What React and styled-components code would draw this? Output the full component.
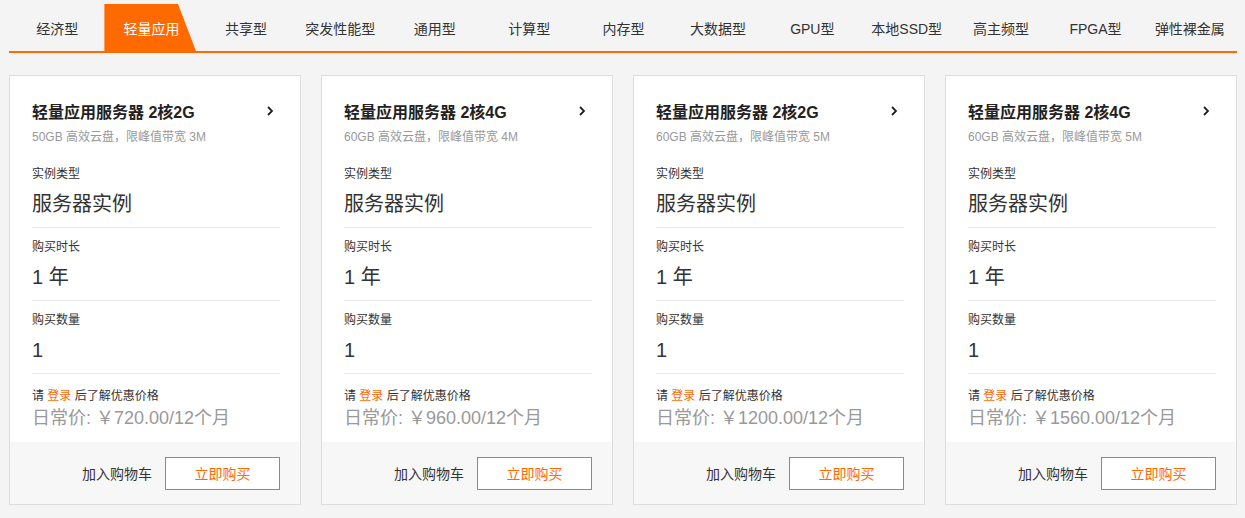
import React from 'react';
import styled, { createGlobalStyle } from 'styled-components';

const GlobalStyle = createGlobalStyle`
    body {
        margin: 0;
        background: #f4f4f4;
        font-family: "Liberation Sans", "Noto Sans CJK SC", sans-serif;
        color: #333;
    }
`;

const Page = styled.div`
    padding: 4px 8px 0 9px;
`;

const TabBar = styled.ul`
    display: flex;
    margin: 0;
    padding: 0 0 0 1px;
    width: 1227px;
    border-bottom: 2px solid #ff6a00;
`;

const Tab = styled.li`
    flex: 1 1 0;
    min-width: 0;
    list-style-type: none;
    height: 47px;
    display: flex;
    align-items: center;
    justify-content: center;
    white-space: nowrap;
    font-size: 14px;
    color: ${props => props.active ? '#fff' : '#333'};
    background: ${props => props.active ? '#ff6a00' : 'transparent'};
    clip-path: ${props => props.active ? 'polygon(0 0, 78% 0, 97% 100%, 0 100%)' : 'none'};
    cursor: pointer;
`;

const CardGrid = styled.div`
    display: grid;
    grid-template-columns: repeat(4, 292px);
    gap: 20px;
    margin-top: 22px;
    width: 1228px;
`;

const Card = styled.div`
    background: #fff;
    border: 1px solid #ddd;
    display: flex;
    flex-direction: column;
`;

const Body = styled.div`
    padding: 24px 20px 12px 22px;
`;

const TitleRow = styled.div`
    display: flex;
    align-items: center;
    justify-content: space-between;
    height: 22px;
`;

const Title = styled.h3`
    margin: 0;
    font-size: 16px;
    font-weight: bold;
    color: #222;
`;

const Arrow = styled.svg`
    margin-right: 6px;
`;

const SubTitle = styled.div`
    margin-top: 6px;
    font-size: 12px;
    line-height: 18px;
    color: #999;
    margin-bottom: 9px;
`;

const Section = styled.div`
    padding: 10px 0 9px;
    border-bottom: 1px solid #e8e8e8;
`;

const Label = styled.div`
    font-size: 12px;
    line-height: 18px;
    color: #333;
`;

const Value = styled.div`
    margin-top: 7px;
    font-size: 20px;
    line-height: 28px;
    color: #333;
`;

const LoginTip = styled.div`
    margin-top: 13px;
    font-size: 12px;
    line-height: 18px;
    color: #333;
    a {
        color: #ff6a00;
        text-decoration: none;
    }
`;

const Price = styled.div`
    margin-top: 1px;
    font-size: 18px;
    line-height: 24px;
    color: #999;
`;

const Footer = styled.div`
    background: #f7f7f7;
    height: 62px;
    display: flex;
    align-items: center;
    justify-content: flex-end;
    padding: 0 20px;
    gap: 13px;
`;

const CartLink = styled.span`
    font-size: 14px;
    color: #333;
    cursor: pointer;
`;

const BuyButton = styled.button`
    width: 115px;
    height: 33px;
    border: 1px solid #ff6a00;
    background: #fff;
    color: #ff6a00;
    font-family: inherit;
    font-size: 14px;
    cursor: pointer;
`;

const tabs = ['经济型', '轻量应用', '共享型', '突发性能型', '通用型', '计算型', '内存型', '大数据型', 'GPU型', '本地SSD型', '高主频型', 'FPGA型', '弹性裸金属'];

const products = [
    { title: '轻量应用服务器 2核2G', desc: '50GB 高效云盘，限峰值带宽 3M', price: '720.00' },
    { title: '轻量应用服务器 2核4G', desc: '60GB 高效云盘，限峰值带宽 4M', price: '960.00' },
    { title: '轻量应用服务器 2核2G', desc: '60GB 高效云盘，限峰值带宽 5M', price: '1200.00' },
    { title: '轻量应用服务器 2核4G', desc: '60GB 高效云盘，限峰值带宽 5M', price: '1560.00' },
];

const ProductCard = ({ title, desc, price }) => (
    <Card>
        <Body>
            <TitleRow>
                <Title>{title}</Title>
                <Arrow width="8" height="10" viewBox="0 0 8 10">
                    <polyline points="2,1 6,5 2,9" fill="none" stroke="#222" strokeWidth="1.8" />
                </Arrow>
            </TitleRow>
            <SubTitle>{desc}</SubTitle>
            <Section>
                <Label>实例类型</Label>
                <Value>服务器实例</Value>
            </Section>
            <Section>
                <Label>购买时长</Label>
                <Value>1 年</Value>
            </Section>
            <Section>
                <Label>购买数量</Label>
                <Value>1</Value>
            </Section>
            <LoginTip>请 <a href="#">登录</a> 后了解优惠价格</LoginTip>
            <Price>日常价: ￥{price}/12个月</Price>
        </Body>
        <Footer>
            <CartLink>加入购物车</CartLink>
            <BuyButton>立即购买</BuyButton>
        </Footer>
    </Card>
);

const App = () => (
    <Page>
        <GlobalStyle />
        <TabBar>
            {tabs.map((t, i) => (
                <Tab key={t} active={i === 1}>{t}</Tab>
            ))}
        </TabBar>
        <CardGrid>
            {products.map((p, i) => (
                <ProductCard key={i} {...p} />
            ))}
        </CardGrid>
    </Page>
);

export default App;
